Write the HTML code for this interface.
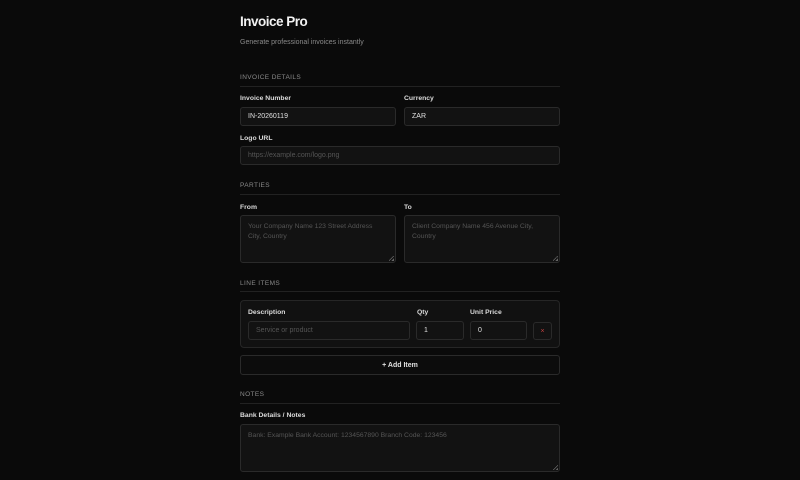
<!DOCTYPE html>
<html><head><meta charset="utf-8"><style>
*{box-sizing:border-box;margin:0;padding:0}
body{width:800px;height:480px;background:#0a0a0a;font-family:"Liberation Sans",sans-serif;color:#e8e8e8;position:relative;overflow:hidden}
.a{position:absolute}
.h{font-size:6.5px;color:#8a8a8a;letter-spacing:0.4px}
.line{position:absolute;left:240px;width:320px;height:1px;background:#222}
.l{font-size:6.8px;color:#dcdcdc;font-weight:bold}
.in{position:absolute;background:#121212;border:1px solid #2a2a2a;border-radius:3px;font-size:7px;padding-left:7px;display:flex;align-items:center;color:#e0e0e0}
.ta{align-items:flex-start;padding-top:6px;padding-right:8px;line-height:10px;font-size:6.8px}
.ph{color:#555}
.grip{position:absolute;right:1px;bottom:1px;width:5px;height:5px;background:linear-gradient(135deg,transparent 45%,#666 45%,#666 55%,transparent 55%,transparent 75%,#666 75%)}
</style></head><body>
<div class="a" style="left:240px;top:14px;font-size:13.5px;font-weight:bold;letter-spacing:-0.5px;color:#f2f2f2">Invoice Pro</div>
<div class="a" style="left:240px;top:39px;font-size:7px;color:#8a8a8a">Generate professional invoices instantly</div>

<div class="a h" style="left:240px;top:74px">INVOICE DETAILS</div>
<div class="line" style="top:86px"></div>
<div class="a l" style="left:240px;top:95px">Invoice Number</div>
<div class="a l" style="left:404px;top:95px">Currency</div>
<div class="in" style="left:240px;top:107px;width:156px;height:19px">IN-20260119</div>
<div class="in" style="left:404px;top:107px;width:156px;height:19px">ZAR</div>
<div class="a l" style="left:240px;top:135px">Logo URL</div>
<div class="in ph" style="left:240px;top:146px;width:320px;height:19px">https://example.com/logo.png</div>

<div class="a h" style="left:240px;top:182px">PARTIES</div>
<div class="line" style="top:194px"></div>
<div class="a l" style="left:240px;top:204px">From</div>
<div class="a l" style="left:404px;top:204px">To</div>
<div class="in ta ph" style="left:240px;top:215px;width:156px;height:48px">Your Company Name 123 Street Address City, Country<span class="grip"></span></div>
<div class="in ta ph" style="left:404px;top:215px;width:156px;height:48px">Client Company Name 456 Avenue City, Country<span class="grip"></span></div>

<div class="a h" style="left:240px;top:280px">LINE ITEMS</div>
<div class="line" style="top:291px"></div>
<div class="a" style="left:240px;top:300px;width:320px;height:48px;background:#111;border:1px solid #262626;border-radius:4px"></div>
<div class="a l" style="left:248px;top:309px">Description</div>
<div class="a l" style="left:417px;top:309px">Qty</div>
<div class="a l" style="left:470px;top:309px">Unit Price</div>
<div class="in ph" style="left:248px;top:321px;width:162px;height:19px">Service or product</div>
<div class="in" style="left:416px;top:321px;width:48px;height:19px">1</div>
<div class="in" style="left:470px;top:321px;width:57px;height:19px">0</div>
<div class="in" style="left:533px;top:322px;width:19px;height:18px;padding:0;justify-content:center;color:#c04040;font-size:7px">×</div>
<div class="in" style="left:240px;top:355px;width:320px;height:20px;padding:0;justify-content:center;font-weight:bold;font-size:7px;background:#0c0c0c">+ Add Item</div>

<div class="a h" style="left:240px;top:391px">NOTES</div>
<div class="line" style="top:403px"></div>
<div class="a l" style="left:240px;top:412px">Bank Details / Notes</div>
<div class="in ta ph" style="left:240px;top:424px;width:320px;height:48px">Bank: Example Bank Account: 1234567890 Branch Code: 123456<span class="grip"></span></div>
</body></html>
